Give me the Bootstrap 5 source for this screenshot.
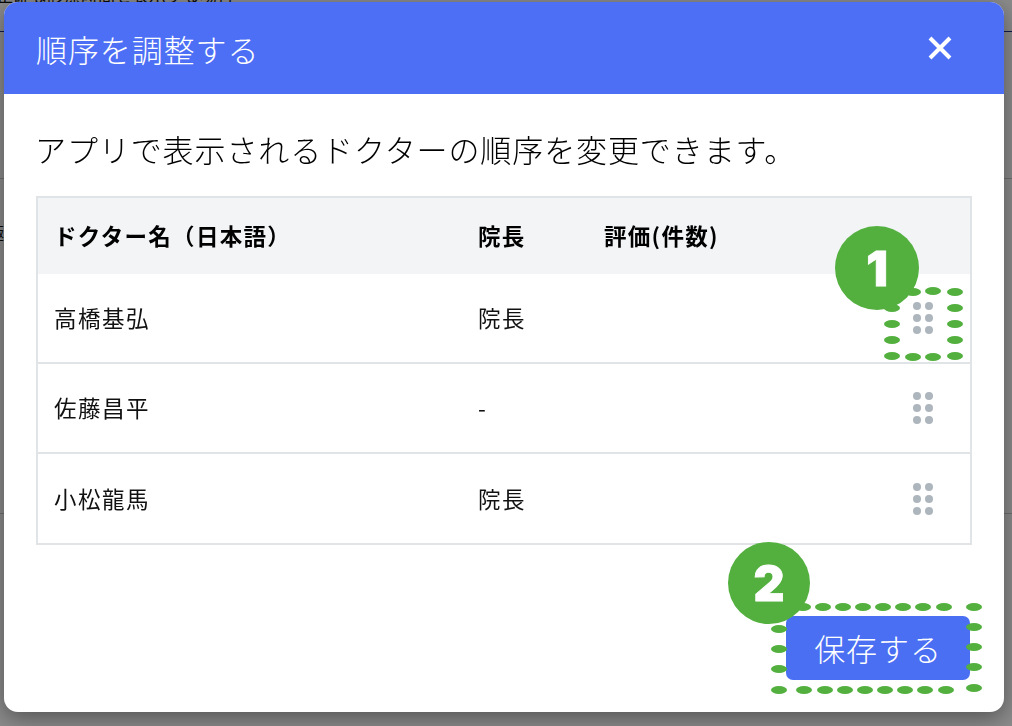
<!DOCTYPE html>
<html lang="ja">
<head>
  <meta charset="UTF-8">
  <title>順序を調整する</title>
  <link href="https://cdn.jsdelivr.net/npm/bootstrap@5.3.0/dist/css/bootstrap.min.css" rel="stylesheet">
  <style>
    body { font-family: "Noto Sans CJK JP", "Liberation Sans", sans-serif; background: #fff; overflow: hidden; height: 726px; }
    .behind-top { font-size: 17px; line-height: 20px; color: #111; margin: -15px 0 0 -4px; height: 20px; white-space: nowrap; }
    .behind-rule { border-top: 1px solid #ccc; }
    .behind-rule.blue { border-color: #1c2f8c; margin-top: 26px; }
    .behind-glyph { font-size: 17px; line-height: 20px; color: #111; margin-left: -13px; height: 20px; }
    .modal-backdrop.show { opacity: .46; }
    .order-dialog { max-width: 1000px; margin: 2px 0 0 4px; }
    .order-content { border: 0; border-radius: 14px; height: 710px; box-shadow: 0 6px 22px rgba(0,0,0,.4); overflow: hidden; }
    .order-header { background: #4c6ff5; color: #fff; height: 92px; padding: 0 52px 0 32px; border: 0; border-radius: 0; }
    .order-title { font-size: 31px; font-weight: 300; letter-spacing: .9px; line-height: 1; margin: 0; }
    .order-close { background: none; border: 0; padding: 0; width: 24px; height: 24px; line-height: 0; }
    .order-body { padding: 34px 32px 0; color: #111; }
    .order-lead { font-size: 31px; font-weight: 300; letter-spacing: .9px; line-height: 42px; margin-bottom: 26px; margin-left: -1px; color: #000; }
    .order-wrap { border: 2px solid #e1e4e7; }
    .order-table { font-size: 22.5px; letter-spacing: 1.5px; color: #111; margin: 0; table-layout: fixed; }
    .order-table th { background: #f2f4f6; height: 76px; font-size: 22.5px; letter-spacing: 1.3px; vertical-align: middle; padding: 0 0 0 16px; border: 0; color: #000; }
    .order-table td { height: 90px; vertical-align: middle; padding: 0 0 0 16px; border-bottom: 2px solid #e1e4e7; }
    .order-table tbody tr:first-child td { height: 89px; }
    .order-table tr:last-child td { border-bottom: 0; }
    .col-name { width: 424px; }
    .col-head { width: 126px; }
    .col-handle { width: 100px; }
    .drag-grip { display: block; margin-left: 27px; }
    .order-footer { padding: 0 34px 32px 0; border: 0; margin-top: auto; }
    .order-footer > .order-save { margin: 0; }
    .order-save { background: #4a6ff3; border: 0; color: #fff; width: 184px; height: 64px; font-size: 31px; font-weight: 300; letter-spacing: .9px; border-radius: 7px; padding: 0; }
    .callouts { position: fixed; left: 0; top: 0; z-index: 1060; pointer-events: none; }
    .callouts ellipse, .callouts circle { fill: #53b03f; }
    .callouts text { fill: #fff; stroke: #fff; stroke-width: .8px; font-family: "Inter", "Liberation Sans", sans-serif; font-weight: 900; font-size: 48px; text-anchor: middle; }
  </style>
</head>
<body>
  <!-- page behind the modal -->
  <div class="behind-top">正確な診療時間を表示する場合</div>
  <div class="behind-rule blue"></div>
  <div class="behind-rule" style="margin-top:146px"></div>
  <div class="behind-glyph" style="margin-top:44px">極</div>
  <div class="behind-glyph" style="margin-top:143px">0</div>
  <div class="behind-rule" style="margin-top:107px"></div>

  <div class="modal-backdrop fade show"></div>
  <div class="modal fade show d-block" tabindex="-1">
    <div class="modal-dialog order-dialog">
      <div class="modal-content order-content d-flex flex-column">
        <div class="modal-header order-header d-flex justify-content-between align-items-center">
          <h5 class="order-title">順序を調整する</h5>
          <button type="button" class="order-close" aria-label="Close">
            <svg width="24" height="24" viewBox="0 0 24 24"><path d="M2 2L22 22M22 2L2 22" stroke="#fff" stroke-width="4" fill="none"/></svg>
          </button>
        </div>
        <div class="modal-body order-body flex-grow-0">
          <p class="order-lead">アプリで表示されるドクターの順序を変更できます。</p>
          <div class="order-wrap">
            <table class="table order-table">
              <thead>
                <tr>
                  <th class="col-name">ドクター名（日本語）</th>
                  <th class="col-head">院長</th>
                  <th>評価(件数)</th>
                  <th class="col-handle"></th>
                </tr>
              </thead>
              <tbody>
                <tr>
                  <td>高橋基弘</td><td>院長</td><td></td>
                  <td><svg class="drag-grip" width="20" height="32" viewBox="0 0 20 32"><g fill="#adb5bd"><circle cx="4" cy="4" r="4"/><circle cx="16" cy="4" r="4"/><circle cx="4" cy="16" r="4"/><circle cx="16" cy="16" r="4"/><circle cx="4" cy="28" r="4"/><circle cx="16" cy="28" r="4"/></g></svg></td>
                </tr>
                <tr>
                  <td>佐藤昌平</td><td>-</td><td></td>
                  <td><svg class="drag-grip" width="20" height="32" viewBox="0 0 20 32"><g fill="#adb5bd"><circle cx="4" cy="4" r="4"/><circle cx="16" cy="4" r="4"/><circle cx="4" cy="16" r="4"/><circle cx="16" cy="16" r="4"/><circle cx="4" cy="28" r="4"/><circle cx="16" cy="28" r="4"/></g></svg></td>
                </tr>
                <tr>
                  <td>小松龍馬</td><td>院長</td><td></td>
                  <td><svg class="drag-grip" width="20" height="32" viewBox="0 0 20 32"><g fill="#adb5bd"><circle cx="4" cy="4" r="4"/><circle cx="16" cy="4" r="4"/><circle cx="4" cy="16" r="4"/><circle cx="16" cy="16" r="4"/><circle cx="4" cy="28" r="4"/><circle cx="16" cy="28" r="4"/></g></svg></td>
                </tr>
              </tbody>
            </table>
          </div>
        </div>
        <div class="modal-footer order-footer justify-content-end">
          <button type="button" class="btn order-save">保存する</button>
        </div>
      </div>
    </div>
  </div>

  <!-- annotation layer drawn on top of the screenshot -->
  <svg class="callouts" id="callouts" width="1012" height="726" viewBox="0 0 1012 726">
    <circle cx="877" cy="268" r="42"/>
    <text x="877" y="286">1</text>
    <circle cx="769" cy="583" r="41"/>
    <text x="769" y="601">2</text>
  </svg>
  <script>
    // dotted outlines round the two highlighted areas
    const dots = [
      [913,292],[933,291],[955,292],[955,308],[955,324],[955,340],[955,356],[892,308],[892,324],[892,340],[892,356],[913,357],[933,357],
      [803,607],[823,607],[843,607],[863,607],[883,607],[903,607],[923,607],[944,607],[974,607],[974,627],[974,647],[974,667],[974,688],
      [779,629],[779,649],[779,669],[779,690],[804,690],[825,690],[845,690],[865,690],[885,690],[905,690],[925,690],[946,690]
    ];
    const layer = document.getElementById('callouts');
    dots.forEach(([x, y]) => {
      const e = document.createElementNS('http://www.w3.org/2000/svg', 'ellipse');
      e.setAttribute('cx', x);
      e.setAttribute('cy', y);
      e.setAttribute('rx', 8);
      e.setAttribute('ry', 4);
      layer.insertBefore(e, layer.firstChild);
    });
  </script>
  <script src="https://cdn.jsdelivr.net/npm/bootstrap@5.3.0/dist/js/bootstrap.bundle.min.js"></script>
</body>
</html>
